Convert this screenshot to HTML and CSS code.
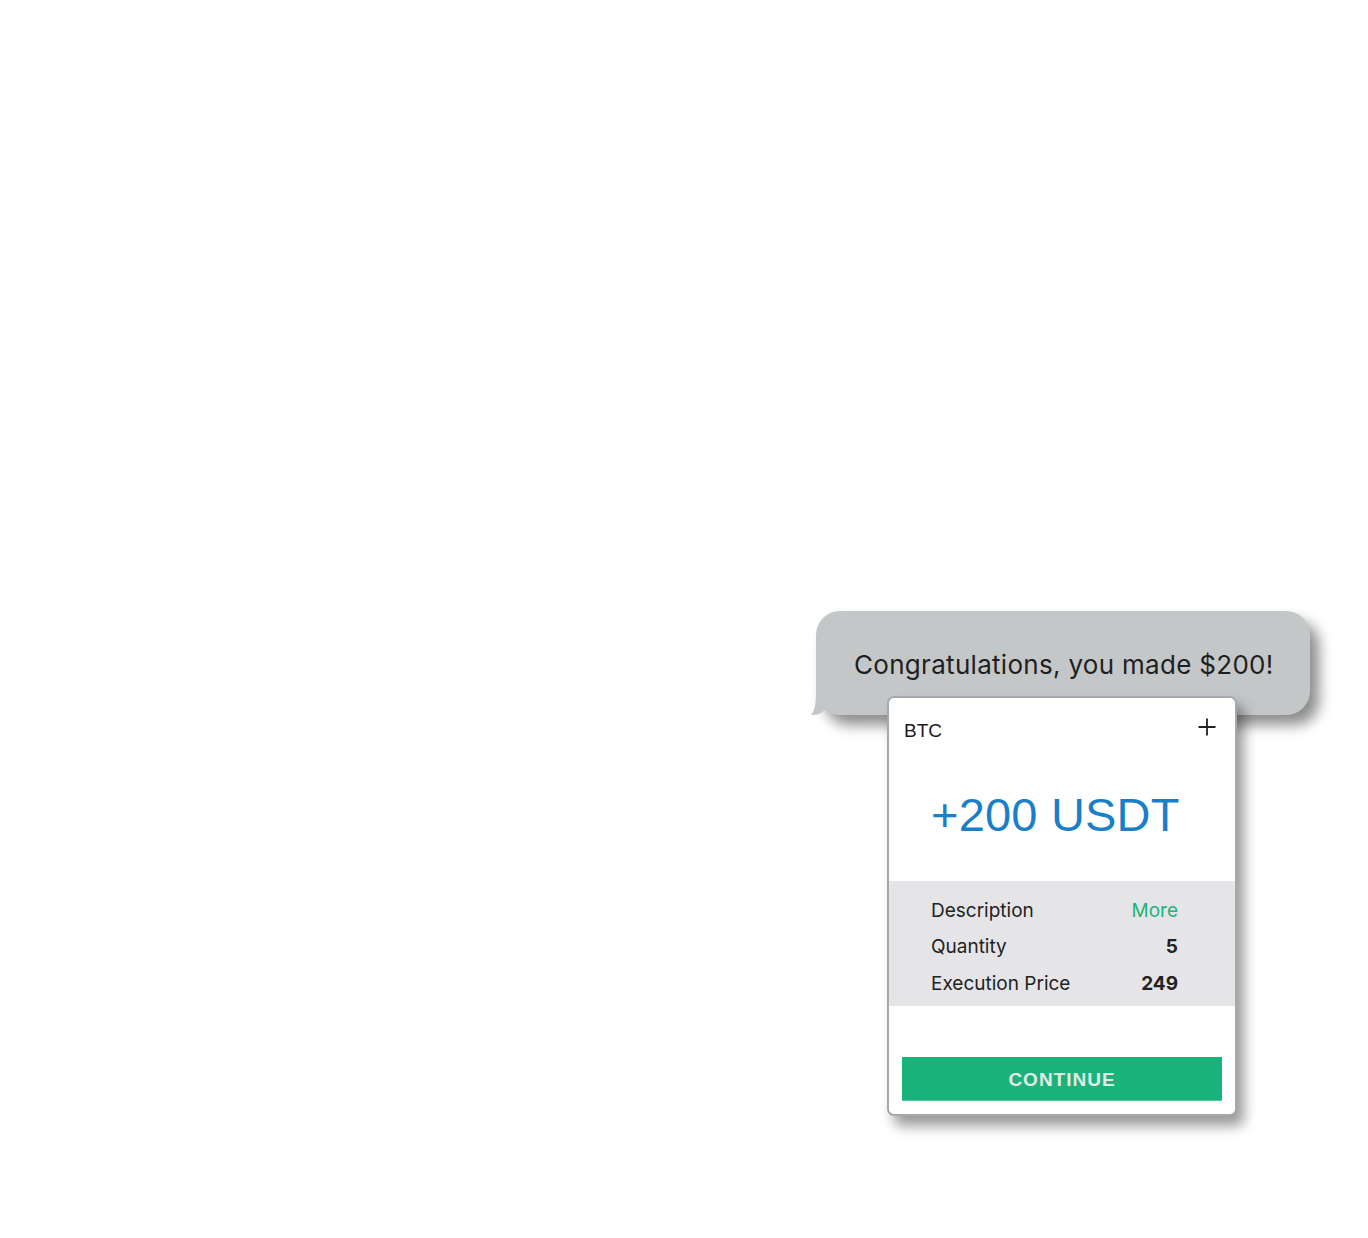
FILE: index.html
```html
<!DOCTYPE html>
<html>
<head>
<meta charset="utf-8">
<link rel="stylesheet" href="styles.css">
</head>
<body>
<div class="stage">
  <div class="bubble">
    <p class="bubble-text">Congratulations, you made $200!</p>
  </div>
  <div class="card">
    <div class="card-head">
      <span class="coin">BTC</span>
      <svg class="plus" width="20" height="20" viewBox="0 0 20 20"><path d="M10 1.5V18.5M1.5 10H18.5" stroke="#222" stroke-width="1.8" fill="none"/></svg>
    </div>
    <div class="amount">+200 USDT</div>
    <div class="details">
      <div class="row"><span class="label">Description</span><span class="more">More</span></div>
      <div class="row"><span class="label">Quantity</span><span class="val">5</span></div>
      <div class="row"><span class="label">Execution Price</span><span class="val">249</span></div>
    </div>
    <div class="spacer"></div>
    <button class="cta">CONTINUE</button>
  </div>
</div>
</body>
</html>
```

FILE: styles.css
```css
html, body {
  margin: 0;
  padding: 0;
  background: #ffffff;
}
.stage {
  width: 1368px;
  height: 1238px;
  padding: 611px 0 0 816px;
  box-sizing: border-box;
  display: flex;
  flex-direction: column;
  align-items: flex-start;
}
.bubble {
  position: relative;
  width: 494px;
  height: 104px;
  box-sizing: border-box;
  background: #c4c7c8;
  border-radius: 24px;
  box-shadow: 9px 10px 14px rgba(0,0,0,0.45);
  padding: 38px 0 0 38px;
}
.bubble::before {
  content: "";
  position: absolute;
  left: -5px;
  bottom: 0;
  width: 30px;
  height: 30px;
  background: #c4c7c8;
  clip-path: path("M5 0 L30 0 L30 24 C22 24 16 22 10 28 C6 30 2 30 0 30 C5 24 5 16 5 0 Z");
}
.bubble-text {
  position: relative;
  margin: 0;
  font-family: Inter, "Liberation Sans", sans-serif;
  font-size: 26px;
  line-height: 32px;
  color: #1f1f1f;
  letter-spacing: 0.3px;
}
.card {
  position: relative;
  margin: -19px 0 0 71px;
  width: 350px;
  height: 420px;
  box-sizing: border-box;
  border: 2px solid #a6a8ad;
  border-radius: 7px;
  background: #ffffff;
  box-shadow: 7px 10px 13px rgba(0,0,0,0.4);
  display: flex;
  flex-direction: column;
}
.card-head {
  display: flex;
  justify-content: space-between;
  align-items: center;
  padding: 20px 18px 0 15px;
  height: 24px;
}
.coin {
  font-family: "Liberation Sans", Arial, sans-serif;
  font-size: 19px;
  color: #1a1a1a;
  line-height: 24px;
  margin-top: 2px;
}
.plus {
  display: block;
  margin-top: -6px;
}
.amount {
  font-family: "Liberation Sans", Arial, sans-serif;
  font-size: 47px;
  line-height: 58px;
  color: #1a7fc8;
  text-align: left;
  padding-left: 42px;
  margin: 44px 0 37px 0;
  letter-spacing: 0.2px;
}
.details {
  background: #e5e5e7;
  padding: 11px 57px 6px 42px;
  height: 125px;
  box-sizing: border-box;
}
.row {
  display: flex;
  justify-content: space-between;
  align-items: center;
  height: 36.5px;
  font-family: Inter, "Liberation Sans", sans-serif;
  font-size: 19px;
  color: #222222;
}
.more {
  color: #1fb27a;
}
.val {
  font-weight: 700;
}
.spacer {
  height: 51px;
}
.cta {
  margin: 0 13px;
  height: 44px;
  border: none;
  background: #18b27a;
  color: #e3ebe7;
  font-family: "Liberation Sans", Arial, sans-serif;
  font-weight: 700;
  font-size: 19px;
  letter-spacing: 1px;
  padding: 2px 0 0 0;
  border-radius: 0;
  border-bottom: 1px solid #4fcb9b;
}
```
